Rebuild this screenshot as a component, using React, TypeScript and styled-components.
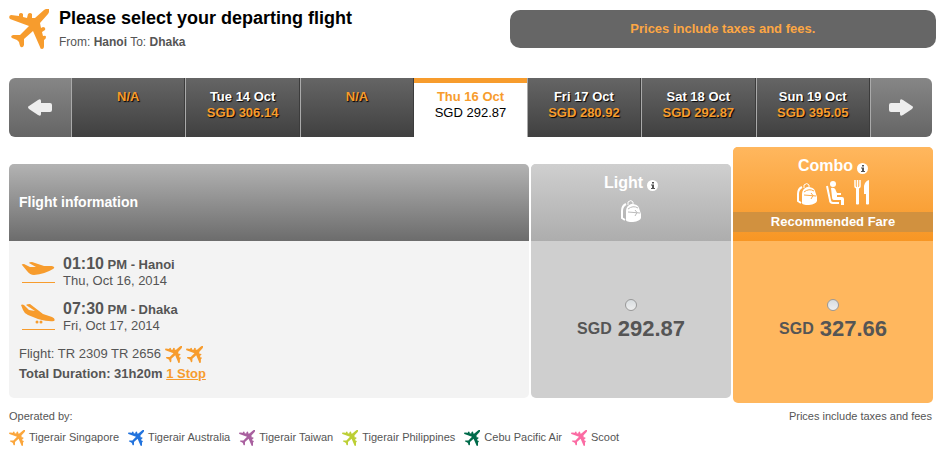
import React from "react";
import styled, { createGlobalStyle, css } from "styled-components";

const GlobalStyle = createGlobalStyle`
  * { box-sizing: border-box; }
  body {
    margin: 0;
    background: #fff;
    color: #555;
    font-family: "Liberation Sans", Arial, sans-serif;
    font-size: 12px;
  }
  button, input { font: inherit; margin: 0; }
`;

const Page = styled.main`
  padding: 0 8px 0 9px;
`;

const Header = styled.header`
  display: flex;
  align-items: flex-start;
  justify-content: space-between;
  height: 78px;
  margin-right: -3px;
`;

const Heading = styled.div`
  display: flex;
  align-items: center;
  gap: 10px;
  padding-top: 8px;
`;

const Title = styled.h1`
  margin: 0;
  color: #000;
  font-size: 18px;
  line-height: 20px;
`;

const Route = styled.p`
  margin: 6px 0 0;
  line-height: 16px;
`;

const Notice = styled.p`
  flex: 0 0 46%;
  margin: 10px 0 0;
  border-radius: 10px;
  background: #666;
  color: #fda744;
  font-size: 13px;
  font-weight: bold;
  line-height: 38px;
  text-align: center;
`;

const DateBar = styled.nav`
  display: flex;
  height: 59px;
  margin-right: 1px;
  overflow: hidden;
  border-radius: 6px;
`;

const ArrowButton = styled.button<{ $next?: boolean }>`
  display: flex;
  flex: 0 0 62px;
  align-items: center;
  justify-content: center;
  padding: 0;
  border: 0;
  border-left: ${(p) => (p.$next ? "1px solid #aaa" : "0")};
  background: linear-gradient(#868686, #656565);
  svg { transform: ${(p) => (p.$next ? "scaleX(-1)" : "none")}; }
`;

const DateTab = styled.button<{ $selected: boolean }>`
  display: flex;
  flex: 1 1 0;
  flex-direction: column;
  align-items: center;
  padding: 11px 0 0;
  border: 0;
  border-left: 1px solid #aaa;
  border-right: 1px solid #3c3c3c;
  background: linear-gradient(#656565, #404040);
  color: #fff;
  font-size: 13px;
  font-weight: bold;
  line-height: 16px;
  text-shadow: 1px 1px 1px #000;
  ${(p) =>
    p.$selected &&
    css`
      padding-top: 6px;
      border-top: 5px solid #f79c2d;
      border-right: 0;
      border-left: 0;
      background: #fff;
      color: #f79c2d;
      text-shadow: none;
    `}
`;

const TabPrice = styled.span<{ $selected: boolean }>`
  color: ${(p) => (p.$selected ? "#000" : "#f79c2d")};
  font-weight: ${(p) => (p.$selected ? "normal" : "bold")};
`;

const Fares = styled.section`
  display: grid;
  grid-template-columns: minmax(0, 1fr) 200px 200px;
  gap: 2px;
  margin-top: 10px;
`;

const Column = styled.section<{ $featured?: boolean; $body: string }>`
  display: flex;
  flex-direction: column;
  margin: ${(p) => (p.$featured ? "0" : "17px 0 5px")};
  overflow: hidden;
  border-radius: 5px;
  background: ${(p) => p.$body};
`;

const InfoHead = styled.h2`
  height: 77px;
  margin: 0;
  padding-left: 10px;
  background: linear-gradient(#b3b3b3, #6c6c6c);
  color: #fff;
  font-size: 14px;
  line-height: 76px;
`;

const FareHead = styled.div<{ $featured?: boolean }>`
  display: flex;
  flex-direction: column;
  align-items: center;
  height: ${(p) => (p.$featured ? "94px" : "77px")};
  padding-top: 9px;
  background: ${(p) =>
    p.$featured ? "linear-gradient(#ffb75e, #f79624)" : "linear-gradient(#cfcfcf, #adadad)"};
  color: #fff;
`;

const FareName = styled.h2`
  display: flex;
  align-items: center;
  gap: 4px;
  margin: 0;
  font-size: 16px;
  line-height: 20px;
`;

const InfoButton = styled.button`
  display: flex;
  margin-top: 4px;
  padding: 0;
  border: 0;
  background: none;
`;

const Perks = styled.div`
  display: flex;
  align-items: flex-end;
  gap: 9px;
  height: 25px;
  margin-top: 4px;
`;

const Recommended = styled.div`
  align-self: stretch;
  margin-top: 7px;
  background: #d1913f;
  font-size: 13px;
  font-weight: bold;
  line-height: 20px;
  text-align: center;
`;

const FareChoice = styled.label`
  display: flex;
  flex-direction: column;
  align-items: center;
  gap: 6px;
  padding-top: 58px;
`;

const Radio = styled.input`
  appearance: none;
  width: 12px;
  height: 12px;
  border: 1px solid #999;
  border-radius: 50%;
  background: linear-gradient(#d8dde0, #eee);
`;

const Price = styled.span`
  display: flex;
  gap: 6px;
  font-size: 22px;
  font-weight: bold;
  line-height: 24px;
`;

const Currency = styled.span`
  font-size: 16px;
  line-height: 23px;
`;

const Details = styled.div`
  display: flex;
  flex-direction: column;
  gap: 10px;
  padding: 15px 10px 14px;
  font-size: 13px;
`;

const Legs = styled.div`
  display: flex;
  flex-direction: column;
  gap: 12px;
`;

const Leg = styled.div`
  display: flex;
  align-items: center;
  gap: 8px;
  padding-left: 2px;
  line-height: 16px;
`;

const LegTime = styled.div`
  font-weight: bold;
`;

const Clock = styled.span`
  font-size: 16px;
`;

const Summary = styled.div`
  line-height: 20px;
`;

const SummaryLine = styled.div`
  display: flex;
  align-items: center;
  gap: 4px;
`;

const StopLink = styled.a`
  color: #f79c2d;
  font-weight: bold;
`;

const Footer = styled.footer`
  padding: 6px 1px 0 0;
  font-size: 11px;
`;

const FooterTop = styled.div`
  display: flex;
  justify-content: space-between;
  line-height: 14px;
`;

const Airlines = styled.ul`
  display: flex;
  flex-wrap: wrap;
  gap: 9px;
  margin: 6px 0 0;
  padding: 0;
  list-style: none;
`;

const Airline = styled.li`
  display: flex;
  align-items: center;
  gap: 4px;
  line-height: 17px;
`;

const Plane = ({ size, color = "#f79c2d" }: { size: number; color?: string }) => (
  <svg width={size} height={size} viewBox="0 0 40 40" fill={color} aria-hidden="true">
    <path d="M35 1 Q38 -1 40 0 Q41 2 39 5 L31 14 L32 19 L34 18 Q37 18 36 21 L33 23 L34 27 Q37 26 37 28 Q37 30 35 31 L35 37 Q35 40 33 40 Q31 40 31 38 L24 22 L15 30 L15 36 Q14 39 12 38 Q11 38 10 33 L8 31 L3 29 Q1 27 4 26 L11 26 L20 17 L1 10 Q-1 7 2 6 L10 7 L10 5 Q12 3 14 5 L14 8 L18 9 L19 5 Q21 3 23 5 L23 9 L26 9Z" />
  </svg>
);

const Arrow = () => (
  <svg width="24" height="17" viewBox="0 0 24 17" fill="#eee" aria-hidden="true">
    <path d="M1 7 L10 1 Q13 -1 13 2 V4 H22 Q24 4 24 6 V11 Q24 13 22 13 H13 V15 Q13 18 10 16 L1 10 Q-1 8 1 7Z" />
  </svg>
);

const Info = () => (
  <svg width="11" height="11" viewBox="0 0 11 11" aria-hidden="true">
    <circle cx="5.5" cy="5.5" r="5.5" fill="#fff" />
    <path d="M5 2h2v1.500H5zM4 4.500h3V8h1v1H4V8h1V5.500H4z" fill="#555" />
  </svg>
);

const Takeoff = () => (
  <svg width="34" height="22" viewBox="0 0 34 22" fill="#f79c2d" aria-hidden="true">
    <path d="M1 3 Q0 2 3 2 L9 5 L15 5 L8 1 Q8 0 11 0 L23 4 L31 4 Q35 5 32 7 Q24 12 13 13 Q9 13 6 9Z" />
    <path d="M1 20h33v1H1z" />
  </svg>
);

const Landing = () => (
  <svg width="34" height="28" viewBox="0 0 34 28" fill="#f79c2d" aria-hidden="true">
    <path d="M0 1 Q1 0 3 1 L8 6 L14 7 L5 1 Q6 0 9 0 L22 10 L31 13 Q35 15 33 17 Q28 18 17 15 L7 11 Q3 9 2 6Z" />
    <circle cx="16" cy="18" r="1.5" />
    <circle cx="20" cy="18" r="1.5" />
    <path d="M1 25h33v1H1z" />
  </svg>
);

const Bag = ({ line }: { line: string }) => (
  <svg width="20" height="22" viewBox="0 0 20 22" aria-hidden="true">
    <path d="M7 5 V2 Q10 -1 12 2 V5" fill="none" stroke="#fff" />
    <path d="M5 4 Q1 6 1 11 V18 L4 20" fill="none" stroke="#fff" strokeWidth="2" />
    <path d="M10 4 Q17 4 18 8 L20 14 V18 Q19 21 12 22 Q5 22 5 20 V11 Q5 6 10 4Z" fill="#fff" />
    <path d="M7 9 Q12 5 17 8 M7 12 L19 13 M14 10 L16 12.500 L14 16" fill="none" stroke={line} />
  </svg>
);

const Seat = () => (
  <svg width="19" height="24" viewBox="0 0 19 24" aria-hidden="true">
    <circle cx="7" cy="3" r="3" fill="#fff" />
    <path d="M5 7 Q9 6 10 10 L11 12 H15 V14 H11 V16 H16 Q18 16 18 18 V24 H15 V19 H8 Q6 19 6 16Z" fill="#fff" />
    <path d="M1 5 L4 19 Q4 22 7 22 H13" fill="none" stroke="#fff" strokeWidth="2" />
  </svg>
);

const Cutlery = () => (
  <svg width="15" height="25" viewBox="0 0 15 25" aria-hidden="true">
    <path d="M1 0 V6 Q1 8 3.500 8 Q6 8 6 6 V0 M3.500 0 V8" fill="none" stroke="#fff" strokeWidth="1.500" />
    <path d="M2 8h3v16q-1.500 1-3 0ZM15 0v24q-1.500 1-3 0V14h-2V6Q11 1 15 0Z" fill="#fff" />
  </svg>
);

const dates = [
  { day: "", price: "N/A" },
  { day: "Tue 14 Oct", price: "SGD 306.14" },
  { day: "", price: "N/A" },
  { day: "Thu 16 Oct", price: "SGD 292.87", selected: true },
  { day: "Fri 17 Oct", price: "SGD 280.92" },
  { day: "Sat 18 Oct", price: "SGD 292.87" },
  { day: "Sun 19 Oct", price: "SGD 395.05" },
];

const legs = [
  { icon: <Takeoff />, time: "01:10", place: "PM - Hanoi", date: "Thu, Oct 16, 2014" },
  { icon: <Landing />, time: "07:30", place: "PM - Dhaka", date: "Fri, Oct 17, 2014" },
];

const airlines = [
  { name: "Tigerair Singapore", color: "#fba63c" },
  { name: "Tigerair Australia", color: "#2273dd" },
  { name: "Tigerair Taiwan", color: "#a9609f" },
  { name: "Tigerair Philippines", color: "#bccf35" },
  { name: "Cebu Pacific Air", color: "#006b4a" },
  { name: "Scoot", color: "#fb6ba3" },
];

const FarePrice = ({ amount }: { amount: string }) => (
  <FareChoice>
    <Radio type="radio" name="fare" />
    <Price>
      <Currency>SGD</Currency>
      {amount}
    </Price>
  </FareChoice>
);

export default function App() {
  return (
    <>
      <GlobalStyle />
      <Page>
        <Header>
          <Heading>
            <Plane size={40} />
            <div>
              <Title>Please select your departing flight</Title>
              <Route>
                From: <b>Hanoi</b> To: <b>Dhaka</b>
              </Route>
            </div>
          </Heading>
          <Notice>Prices include taxes and fees.</Notice>
        </Header>
        <DateBar aria-label="Departure dates">
          <ArrowButton aria-label="Earlier dates"><Arrow /></ArrowButton>
          {dates.map((d, i) => (
            <DateTab key={i} $selected={!!d.selected}>
              {d.day && <span>{d.day}</span>}
              <TabPrice $selected={!!d.selected}>{d.price}</TabPrice>
            </DateTab>
          ))}
          <ArrowButton $next aria-label="Later dates"><Arrow /></ArrowButton>
        </DateBar>
        <Fares>
          <Column $body="#f3f3f3">
            <InfoHead>Flight information</InfoHead>
            <Details>
              <Legs>
                {legs.map((leg) => (
                  <Leg key={leg.time}>
                    {leg.icon}
                    <div>
                      <LegTime><Clock>{leg.time}</Clock> {leg.place}</LegTime>
                      <div>{leg.date}</div>
                    </div>
                  </Leg>
                ))}
              </Legs>
              <Summary>
                <SummaryLine>
                  Flight: TR 2309 TR 2656 <Plane size={17} /><Plane size={17} />
                </SummaryLine>
                <b>Total Duration: 31h20m</b> <StopLink href="#stops">1 Stop</StopLink>
              </Summary>
            </Details>
          </Column>
          <Column $body="#cfcfcf">
            <FareHead>
              <FareName>Light <InfoButton aria-label="About Light"><Info /></InfoButton></FareName>
              <Perks><Bag line="#bbb" /></Perks>
            </FareHead>
            <FarePrice amount="292.87" />
          </Column>
          <Column $featured $body="#ffb75e">
            <FareHead $featured>
              <FareName>Combo <InfoButton aria-label="About Combo"><Info /></InfoButton></FareName>
              <Perks><Bag line="#fba945" /><Seat /><Cutlery /></Perks>
              <Recommended>Recommended Fare</Recommended>
            </FareHead>
            <FarePrice amount="327.66" />
          </Column>
        </Fares>
        <Footer>
          <FooterTop>
            <span>Operated by:</span>
            <span>Prices include taxes and fees</span>
          </FooterTop>
          <Airlines>
            {airlines.map((a) => (
              <Airline key={a.name}><Plane size={16} color={a.color} />{a.name}</Airline>
            ))}
          </Airlines>
        </Footer>
      </Page>
    </>
  );
}
